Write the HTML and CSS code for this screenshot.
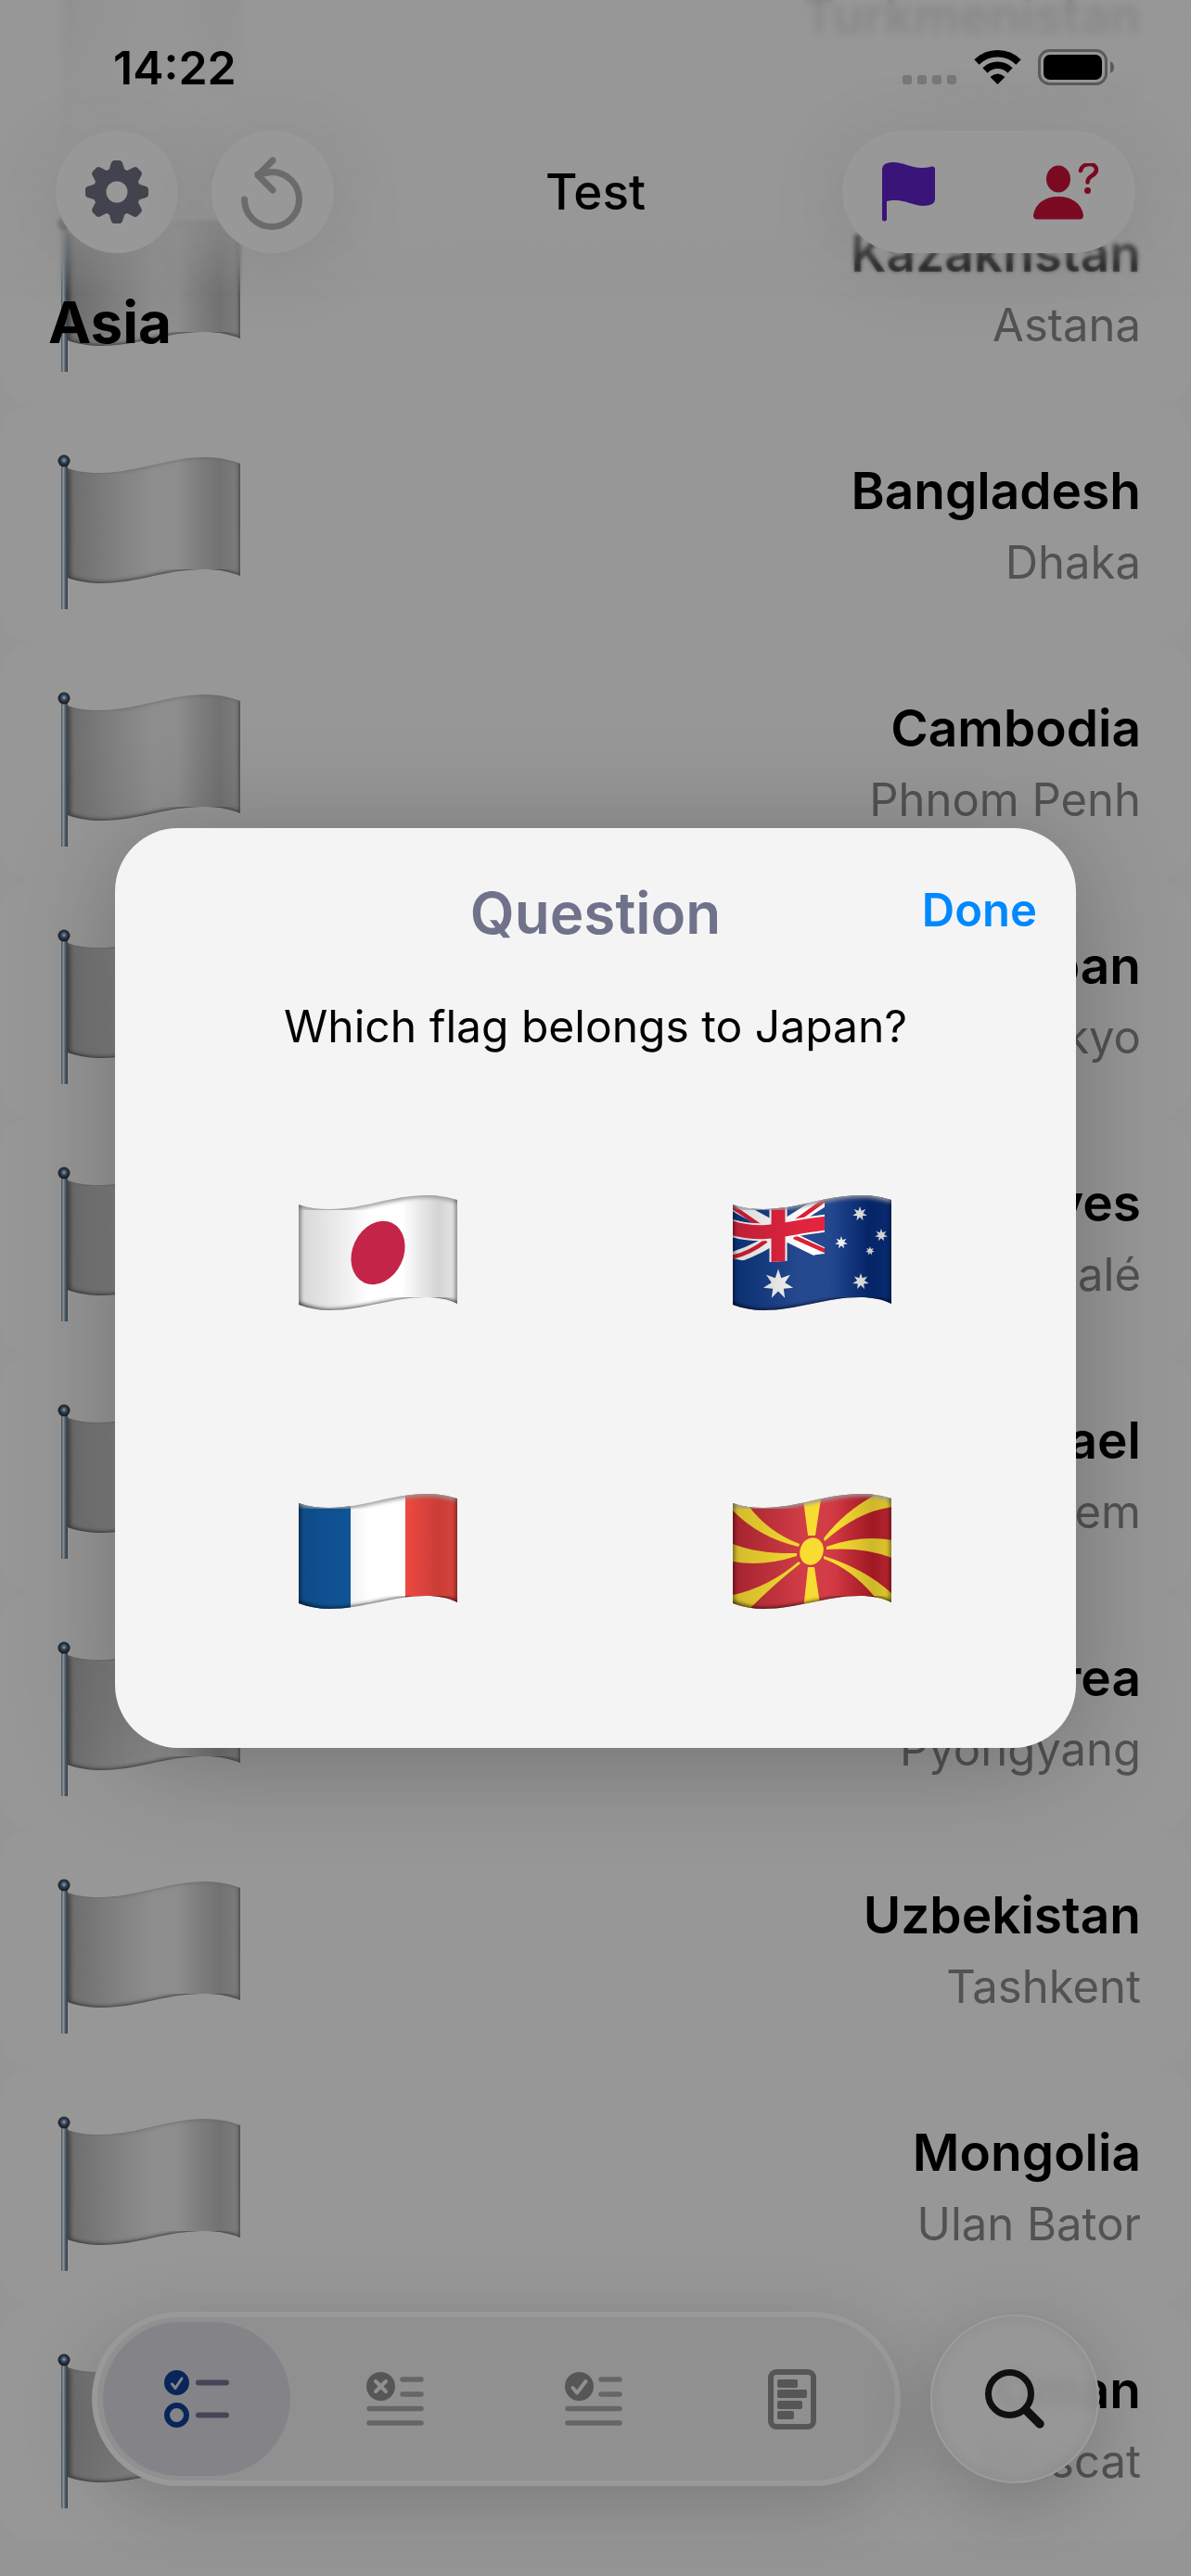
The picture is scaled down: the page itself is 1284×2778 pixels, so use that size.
FILE: index.html
```
<!DOCTYPE html>
<html lang="en">
<head>
    <meta charset="UTF-8">
    <meta name="viewport" content="width=device-width, initial-scale=1.0">
    <title>Flag Test</title>
    <link rel="stylesheet" href="styles.css">
</head>
<body>
    <!-- Shared drawings -->
    <svg class="defs" width="0" height="0" aria-hidden="true">
        <defs>
            <linearGradient id="greyCloth">
                <stop offset="0" stop-color="#6c6c6c"/>
                <stop offset=".3" stop-color="#828282"/>
                <stop offset=".5" stop-color="#8e8e8e"/>
                <stop offset=".64" stop-color="#8d8d8d"/>
                <stop offset=".74" stop-color="#808080"/>
                <stop offset=".88" stop-color="#727272"/>
                <stop offset="1" stop-color="#7e7e7e"/>
            </linearGradient>
            <linearGradient id="blueCloth">
                <stop offset="0" stop-color="#0c3888"/>
                <stop offset=".4" stop-color="#25498f"/>
                <stop offset=".6" stop-color="#25498f"/>
                <stop offset=".85" stop-color="#062c7a"/>
                <stop offset="1" stop-color="#0a3080"/>
            </linearGradient>
            <linearGradient id="redCloth">
                <stop offset="0" stop-color="#c42a36"/>
                <stop offset=".4" stop-color="#d23c46"/>
                <stop offset=".6" stop-color="#d23c46"/>
                <stop offset=".88" stop-color="#c01e2a"/>
                <stop offset="1" stop-color="#cc2c36"/>
            </linearGradient>
            <linearGradient id="pole">
                <stop offset="0" stop-color="#4a4f53"/>
                <stop offset=".35" stop-color="#8d979e"/>
                <stop offset=".6" stop-color="#4d6273"/>
                <stop offset="1" stop-color="#3c3c3c"/>
            </linearGradient>
            <radialGradient id="ball" cx=".5" cy=".45" r=".5">
                <stop offset="0" stop-color="#8aa0b4"/>
                <stop offset=".5" stop-color="#2d3f52"/>
                <stop offset="1" stop-color="#1c1c1e"/>
            </radialGradient>
            <linearGradient id="folds">
                <stop offset="0" stop-color="#000" stop-opacity=".16"/>
                <stop offset=".3" stop-color="#000" stop-opacity=".06"/>
                <stop offset=".45" stop-color="#000" stop-opacity="0"/>
                <stop offset=".65" stop-color="#000" stop-opacity="0"/>
                <stop offset=".88" stop-color="#000" stop-opacity=".17"/>
                <stop offset="1" stop-color="#000" stop-opacity=".1"/>
            </linearGradient>
            <filter id="soft" x="-10%" y="-10%" width="120%" height="120%">
                <feGaussianBlur stdDeviation="2"/>
            </filter>
            <path id="greyShape" d="M11 15C22 19 34 20 45 20C85 20 120 3 158 3C172 3 185 5 197 10V131C185 126 172 124 156 124C118 124 85 139 48 139C35 139 22 137 11 133Z"/>
            <path id="waveShape" d="M0 11C11 15 22 16 33 16C70 16 100 1 138 1C151 1 161 3 171 6V118C161 113 150 111 137 111C100 111 70 125 33 125C22 125 11 123 0 119Z"/>
            <clipPath id="greyClip"><use href="#greyShape"/></clipPath>
            <clipPath id="waveClip"><use href="#waveShape"/></clipPath>
            <clipPath id="cantonClip"><path d="M0 0H99V64C82 65 74 72 40 73C26 73 10 72 0 69Z"/></clipPath>
            <g id="greyFlag">
                <g clip-path="url(#greyClip)">
                    <use href="#greyShape" fill="url(#greyCloth)"/>
                    <path d="M9 134C22 139 35 141 48 141C85 141 118 126 156 126C172 126 185 128 199 134" fill="none" stroke="#333" stroke-width="6" filter="url(#soft)"/>
                    <path d="M11 12L11.500 136M198 6L198.500 134" fill="none" stroke="#3c3c3c" stroke-width="5" filter="url(#soft)"/>
                    <path d="M11 14C22 18 34 19 45 19C85 19 120 2 158 2C172 2 185 4 197 9" fill="none" stroke="#666" stroke-width="3" filter="url(#soft)"/>
                </g>
                <rect x="4" y="12" width="7" height="155" fill="url(#pole)"/>
                <circle cx="7" cy="7" r="6.5" fill="url(#ball)"/>
            </g>
            <g id="shade">
                <use href="#waveShape" fill="url(#folds)"/>
                <path d="M-2 10C11 14 22 15 33 15C70 15 100 0 138 0C151 0 161 2 173 6" fill="none" stroke="#999" stroke-width="7" filter="url(#soft)"/>
                <path d="M-2 119C11 124 22 127 33 127C70 127 100 113 137 113C150 113 161 115 173 120" fill="none" stroke="#000" stroke-opacity=".7" stroke-width="6" filter="url(#soft)"/>
                <path d="M0 9V121M171 4V120" fill="none" stroke="#000" stroke-opacity=".5" stroke-width="4" filter="url(#soft)"/>
            </g>
            <path id="star" fill="#f4f4f4" d="M0-10L1.95-4.05 7.82-6.23 4.39-1 9.75 2.23 3.52 2.81 4.34 9.01 0 4.5-4.34 9.01-3.52 2.81-9.75 2.23-4.39-1-7.82-6.23-1.95-4.05Z"/>
            <path id="tooth" d="M-9-22L-6-31.500Q-5-34-3-34H3Q5-34 6-31.500L9-22Z"/>
        </defs>
    </svg>

    <div class="app">
        <ul class="country-list">
            <li class="country">
                <svg class="flag" viewBox="0 0 200 170"><use href="#greyFlag"/></svg>
                <div class="labels"><strong>Turkmenistan</strong><span>Ashgabat</span></div>
            </li>
            <li class="country">
                <svg class="flag" viewBox="0 0 200 170"><use href="#greyFlag"/></svg>
                <div class="labels"><strong>Kazakhstan</strong><span>Astana</span></div>
            </li>
            <li class="country">
                <svg class="flag" viewBox="0 0 200 170"><use href="#greyFlag"/></svg>
                <div class="labels"><strong>Bangladesh</strong><span>Dhaka</span></div>
            </li>
            <li class="country">
                <svg class="flag" viewBox="0 0 200 170"><use href="#greyFlag"/></svg>
                <div class="labels"><strong>Cambodia</strong><span>Phnom Penh</span></div>
            </li>
            <li class="country">
                <svg class="flag" viewBox="0 0 200 170"><use href="#greyFlag"/></svg>
                <div class="labels"><strong>Japan</strong><span>Tokyo</span></div>
            </li>
            <li class="country">
                <svg class="flag" viewBox="0 0 200 170"><use href="#greyFlag"/></svg>
                <div class="labels"><strong>Maldives</strong><span>Malé</span></div>
            </li>
            <li class="country">
                <svg class="flag" viewBox="0 0 200 170"><use href="#greyFlag"/></svg>
                <div class="labels"><strong>Israel</strong><span>Jerusalem</span></div>
            </li>
            <li class="country">
                <svg class="flag" viewBox="0 0 200 170"><use href="#greyFlag"/></svg>
                <div class="labels"><strong>North Korea</strong><span>Pyongyang</span></div>
            </li>
            <li class="country">
                <svg class="flag" viewBox="0 0 200 170"><use href="#greyFlag"/></svg>
                <div class="labels"><strong>Uzbekistan</strong><span>Tashkent</span></div>
            </li>
            <li class="country">
                <svg class="flag" viewBox="0 0 200 170"><use href="#greyFlag"/></svg>
                <div class="labels"><strong>Mongolia</strong><span>Ulan Bator</span></div>
            </li>
            <li class="country">
                <svg class="flag" viewBox="0 0 200 170"><use href="#greyFlag"/></svg>
                <div class="labels"><strong>Oman</strong><span>Muscat</span></div>
            </li>
        </ul>

        <div class="edge-blur edge-blur-light"></div>
        <div class="edge-blur edge-blur-strong"></div>
        <div class="edge-fade"></div>

        <header class="top">
            <div class="status">
                <time>14:22</time>
                <div class="status-icons">
                    <svg width="60" height="39" viewBox="0 0 60 39" fill="#787878">
                        <rect x="1" y="28" width="10" height="10" rx="3"/><rect x="17" y="28" width="10" height="10" rx="3"/><rect x="33" y="28" width="10" height="10" rx="3"/><rect x="49" y="28" width="10" height="10" rx="3"/>
                    </svg>
                    <svg width="51" height="39" viewBox="0 0 51 39">
                        <path d="M3 14A32 32 0 0 1 48 14M12 23A19 19 0 0 1 39 23" fill="none" stroke="#000" stroke-width="7.500"/>
                        <path d="M25.500 38L17.500 30Q25.500 23 33.500 30Z"/>
                    </svg>
                    <svg width="83" height="39" viewBox="0 0 83 39">
                        <rect x="1.500" y="1.500" width="72" height="36" rx="11" fill="none" stroke="#5a5a5a" stroke-width="3"/>
                        <rect x="6" y="6" width="63" height="27" rx="7"/>
                        <path d="M78 13Q82 15 82 19.500T78 26Z" fill="#5a5a5a"/>
                    </svg>
                </div>
            </div>
            <div class="toolbar">
                <div class="tools">
                    <button class="glass round" aria-label="Settings">
                        <svg width="68" height="68" viewBox="-34 -34 68 68" fill="#42434f">
                            <circle r="18.500" fill="none" stroke="#42434f" stroke-width="14"/>
                            <use href="#tooth"/><use href="#tooth" transform="rotate(45)"/><use href="#tooth" transform="rotate(90)"/><use href="#tooth" transform="rotate(135)"/>
                            <use href="#tooth" transform="rotate(180)"/><use href="#tooth" transform="rotate(225)"/><use href="#tooth" transform="rotate(270)"/><use href="#tooth" transform="rotate(315)"/>
                        </svg>
                    </button>
                    <button class="glass round" aria-label="Restart">
                        <svg width="68" height="88" viewBox="1 0 68 88" fill="none" stroke="#6b6b6b" stroke-width="7" stroke-linecap="round" stroke-linejoin="round">
                            <path d="M4.500 52A29.500 29.500 0 1 0 34 22.500L19 25M35 10L19 26L35 42"/>
                        </svg>
                    </button>
                </div>
                <h1>Test</h1>
                <div class="glass pill">
                    <button aria-label="Guess the flag">
                        <svg width="58" height="64" viewBox="0 0 58 64" fill="#3a1478">
                            <path d="M0 7Q0 4 3 2C17-4 28 6 42 6C48 6 51 5 54 4.500Q57 4.500 57 7.500V40Q57 43 54 45C40 51 28 41 15 41C10 41 7 41.500 5 42V61Q5 63.500 2.500 63.500T0 61Z"/>
                        </svg>
                    </button>
                    <button aria-label="Guess the country">
                        <svg width="70" height="62" viewBox="0 0 70 62" fill="#7a0a22">
                            <ellipse cx="27" cy="17" rx="13" ry="14.500"/>
                            <path d="M0 56C2 43 13 36 27 36S52 43 54 56Q54 60.500 50 60.500H4Q0 60.500 0 56Z"/>
                            <path d="M51 8C53-1 68-1 68 7C68 14 58.500 13 58.500 20.500" fill="none" stroke="#7a0a22" stroke-width="4.500" stroke-linecap="round"/>
                            <circle cx="58.500" cy="29.500" r="3.500"/>
                        </svg>
                    </button>
                </div>
            </div>
            <h2>Asia</h2>
        </header>

        <footer class="bottom">
            <nav class="tabs">
                <button class="tab active" aria-label="Open">
                    <svg width="70" height="62" viewBox="0 0 70 62" fill="none" stroke-linecap="round" stroke-linejoin="round">
                        <circle cx="13.500" cy="13.500" r="13.500" fill="#08265a"/>
                        <path d="M8.500 15L12 19.500L19 9" stroke="#848488" stroke-width="3"/>
                        <circle cx="13.500" cy="48.500" r="10.500" stroke="#08265a" stroke-width="6"/>
                        <path d="M37 13.500H67M37 48.500H67" stroke="#444557" stroke-width="6"/>
                    </svg>
                </button>
                <button class="tab" aria-label="Wrong">
                    <svg width="62" height="58" viewBox="0 0 62 58" fill="none" stroke-linecap="round">
                        <circle cx="15.500" cy="15.500" r="15.500" fill="#565658"/>
                        <path d="M10 10L21 21M21 10L10 21" stroke="#909090" stroke-width="4"/>
                        <path d="M39 8H59M39 24H59M3 39.500H59M3 55H59" stroke="#666" stroke-width="5.500"/>
                    </svg>
                </button>
                <button class="tab" aria-label="Correct">
                    <svg width="62" height="58" viewBox="0 0 62 58" fill="none" stroke-linecap="round" stroke-linejoin="round">
                        <circle cx="15.500" cy="15.500" r="15.500" fill="#565658"/>
                        <path d="M8.500 17L13 22.500L22.500 10" stroke="#909090" stroke-width="4"/>
                        <path d="M39 8H59M39 24H59M3 39.500H59M3 55H59" stroke="#666" stroke-width="5.500"/>
                    </svg>
                </button>
                <button class="tab" aria-label="Results">
                    <svg width="52" height="65" viewBox="0 0 52 65" fill="#565658">
                        <rect x="3" y="3" width="46" height="59" rx="6" fill="none" stroke="#565658" stroke-width="6"/>
                        <rect x="10" y="11" width="22" height="9" rx="2"/><rect x="10" y="22" width="32" height="9" rx="2"/>
                        <rect x="10" y="34" width="27" height="9" rx="2"/><rect x="10" y="45" width="18" height="9" rx="2"/>
                    </svg>
                </button>
            </nav>
            <button class="search" aria-label="Search">
                <svg width="64" height="64" viewBox="0 0 64 64" fill="none" stroke="#101010" stroke-linecap="round">
                    <circle cx="26.500" cy="26.500" r="23" stroke-width="7"/>
                    <path d="M44 44L59 59" stroke-width="9.500"/>
                </svg>
            </button>
        </footer>

        <div class="overlay">
            <section class="dialog" role="dialog" aria-labelledby="dialogTitle">
                <div class="dialog-head">
                    <h2 id="dialogTitle">Question</h2>
                    <button class="done">Done</button>
                </div>
                <p>Which flag belongs to Japan?</p>
                <div class="answers">
                    <button aria-label="Japan">
                        <svg width="172" height="126" viewBox="0 0 172 126"><g clip-path="url(#waveClip)">
                            <rect width="172" height="126" fill="#fff"/>
                            <use href="#shade"/>
                            <ellipse cx="85.500" cy="63" rx="27.500" ry="35.500" transform="rotate(25 85.500 63)" fill="#c42448"/>
                        </g></svg>
                    </button>
                    <button aria-label="Australia">
                        <svg width="172" height="126" viewBox="0 0 172 126"><g clip-path="url(#waveClip)">
                            <rect width="172" height="126" fill="url(#blueCloth)"/>
                            <g clip-path="url(#cantonClip)" fill="none">
                                <path d="M-4 9L49 38M102 4L49 38M-4 70Q30 59 49 44M102 66L49 40" stroke="#fff" stroke-width="13"/>
                                <path d="M-2 12L31 35M102 4L62 33M-2 68Q18 64 36 50M102 62L66 46" stroke="#dc2038" stroke-width="4.500"/>
                                <path d="M-2 36C35 47 55 36 101 31" stroke="#fff" stroke-width="19"/>
                                <path d="M49 0V80" stroke="#fff" stroke-width="19"/>
                                <path d="M-2 36C35 47 55 36 101 31" stroke="#e2243f" stroke-width="15"/>
                                <path d="M49 0V80" stroke="#e2243f" stroke-width="15"/>
                            </g>
                            <use href="#star" transform="translate(49 97) scale(1.65)"/>
                            <use href="#star" transform="translate(137 21) scale(.8)"/>
                            <use href="#star" transform="translate(160 44) scale(.7)"/>
                            <use href="#star" transform="translate(117 52) scale(.7)"/>
                            <use href="#star" transform="translate(148 61) scale(.5)"/>
                            <use href="#star" transform="translate(138 94) scale(.9)"/>
                            <use href="#shade"/>
                        </g></svg>
                    </button>
                    <button aria-label="France">
                        <svg width="172" height="126" viewBox="0 0 172 126"><g clip-path="url(#waveClip)">
                            <rect width="56" height="126" fill="#1059a0"/>
                            <rect x="56" width="59" height="126" fill="#fff"/>
                            <rect x="115" width="57" height="126" fill="#f24a42"/>
                            <use href="#shade"/>
                        </g></svg>
                    </button>
                    <button aria-label="North Macedonia">
                        <svg width="172" height="126" viewBox="0 0 172 126"><g clip-path="url(#waveClip)">
                            <rect width="172" height="126" fill="url(#redCloth)"/>
                            <g fill="#f9dc32">
                                <path d="M75 0H96L89 46H81Z"/>
                                <path d="M76 126H95L88 80H81Z"/>
                                <path d="M0 9L17 14Q38 42 72 55L71 58Q28 48 0 19Z"/>
                                <path d="M0 55Q28 66 69 65V68Q32 80 0 74Z"/>
                                <path d="M0 110Q38 102 71 74L73 76Q45 98 17 126H0Z"/>
                                <path d="M154 0H172V15Q134 20 99 52L98 49Q120 20 154 2Z"/>
                                <path d="M101 58Q138 45 172 51V70Q140 58 101 61Z"/>
                                <path d="M98 68Q143 82 172 109V120L153 112Q128 82 98 71Z"/>
                            </g>
                            <ellipse cx="85" cy="63" rx="12.500" ry="15" transform="rotate(20 85 63)" fill="#f9dc32"/>
                            <use href="#shade"/>
                        </g></svg>
                    </button>
                </div>
            </section>
        </div>
    </div>
</body>
</html>
```
FILE: styles.css
```
* {
    box-sizing: border-box;
}

body {
    font-family: Inter, "Liberation Sans", sans-serif;
    font-size: 49px;
    background-color: #959595;
    color: #000;
    margin: 0;
}

h1, h2, p, ul {
    margin: 0;
    padding: 0;
}

button {
    font: inherit;
    color: inherit;
    background: none;
    border: none;
    padding: 0;
    cursor: pointer;
}

svg {
    display: block;
}

.defs {
    position: absolute;
}

.app {
    position: relative;
    height: 100vh;
    overflow: hidden;
}

/* the list is scrolled a little under the top bar */
.country-list {
    list-style: none;
    margin-top: -75px;
}

.country {
    display: flex;
    justify-content: space-between;
    align-items: flex-start;
    height: 256px;
    padding: 53px 54px 0 62px;
    background-color: #979797;
    border-radius: 36px;
}

.flag {
    width: 200px;
    height: 170px;
}

.labels {
    display: flex;
    flex-direction: column;
    text-align: right;
    line-height: 78px;
}

.labels strong {
    font-size: 55px;
    font-weight: 600;
}

.labels span {
    color: #525254;
}

.edge-blur, .edge-fade {
    position: absolute;
    top: 0;
    left: 0;
    right: 0;
    height: 320px;
}

.edge-blur-light {
    backdrop-filter: blur(2px);
    -webkit-mask-image: linear-gradient(#000 85%, transparent);
    mask-image: linear-gradient(#000 85%, transparent);
}

.edge-blur-strong {
    height: 200px;
    backdrop-filter: blur(5px);
    -webkit-mask-image: linear-gradient(#000 60%, transparent);
    mask-image: linear-gradient(#000 60%, transparent);
}

.edge-fade {
    background: linear-gradient(rgba(151, 151, 151, .88), rgba(151, 151, 151, .96) 35%, rgba(151, 151, 151, .85) 65%, rgba(151, 151, 151, .5) 82%, rgba(151, 151, 151, 0));
}

.top {
    position: absolute;
    top: 0;
    left: 0;
    right: 0;
}

.status {
    display: flex;
    justify-content: space-between;
    align-items: center;
    height: 141px;
    padding: 4px 82px 0 122px;
    font-size: 50px;
    font-weight: 600;
}

.status-icons {
    display: flex;
    gap: 18px;
}

.toolbar {
    display: grid;
    grid-template-columns: 1fr auto 1fr;
    align-items: center;
    padding: 0 60px;
}

.toolbar h1 {
    font-size: 53px;
    font-weight: 500;
}

.tools {
    display: flex;
    gap: 36px;
}

.glass {
    background-color: #989898;
    box-shadow: 0 12px 90px rgba(0, 0, 0, .1);
}

.round {
    display: grid;
    place-items: center;
    width: 132px;
    height: 132px;
    border-radius: 50%;
}

.pill {
    display: flex;
    justify-content: space-between;
    align-items: center;
    justify-self: end;
    width: 316px;
    height: 132px;
    padding: 0 40px 0 43px;
    border-radius: 66px;
}

.top h2 {
    margin-top: 36px;
    padding-left: 52px;
    font-size: 62px;
    line-height: 78px;
    font-weight: 700;
}

.bottom {
    position: absolute;
    left: 0;
    right: 0;
    bottom: 97px;
    display: flex;
    align-items: center;
    gap: 32px;
    padding: 0 99px;
}

.tabs {
    flex: 1;
    display: grid;
    grid-template-columns: repeat(4, 1fr);
    height: 188px;
    padding: 5px 4px 5px 0;
    background-color: #909090;
    border: 6px solid #999;
    border-radius: 94px;
    box-shadow: 0 20px 80px rgba(0, 0, 0, .18);
}

.tab {
    display: grid;
    place-items: center;
    margin: 0 6px;
    border-radius: 83px;
}

.tab.active {
    background-color: #848488;
}

.search {
    display: grid;
    place-items: center;
    width: 182px;
    height: 182px;
    border: 2px solid #9c9c9c;
    border-radius: 50%;
    background-color: rgba(151, 151, 151, .93);
    backdrop-filter: blur(6px);
    box-shadow: 0 20px 80px rgba(0, 0, 0, .2), inset 0 0 14px rgba(0, 0, 0, .08);
}

.overlay {
    position: absolute;
    inset: 0;
    display: grid;
    align-items: center;
    padding: 0 124px;
}

.dialog {
    padding: 54px 50px 51px;
    background-color: #f4f4f4;
    border-radius: 68px;
    box-shadow: 0 12px 110px rgba(0, 0, 0, .25);
}

.dialog-head {
    display: grid;
    grid-template-columns: 1fr auto 1fr;
    align-items: start;
    margin-right: -8px;
    margin-left: -8px;
}

.dialog h2 {
    grid-column: 2;
    font-size: 62px;
    line-height: 76px;
    font-weight: 600;
    color: #70728c;
}

.done {
    justify-self: end;
    line-height: 70px;
    font-weight: 600;
    color: #0088ff;
}

.dialog p {
    margin-top: 52px;
    font-size: 48px;
    line-height: 64px;
    text-align: center;
}

.answers {
    display: grid;
    grid-template-columns: 1fr 1fr;
    margin-top: 51px;
}

.answers button {
    display: grid;
    place-items: center;
    height: 322px;
}
```
